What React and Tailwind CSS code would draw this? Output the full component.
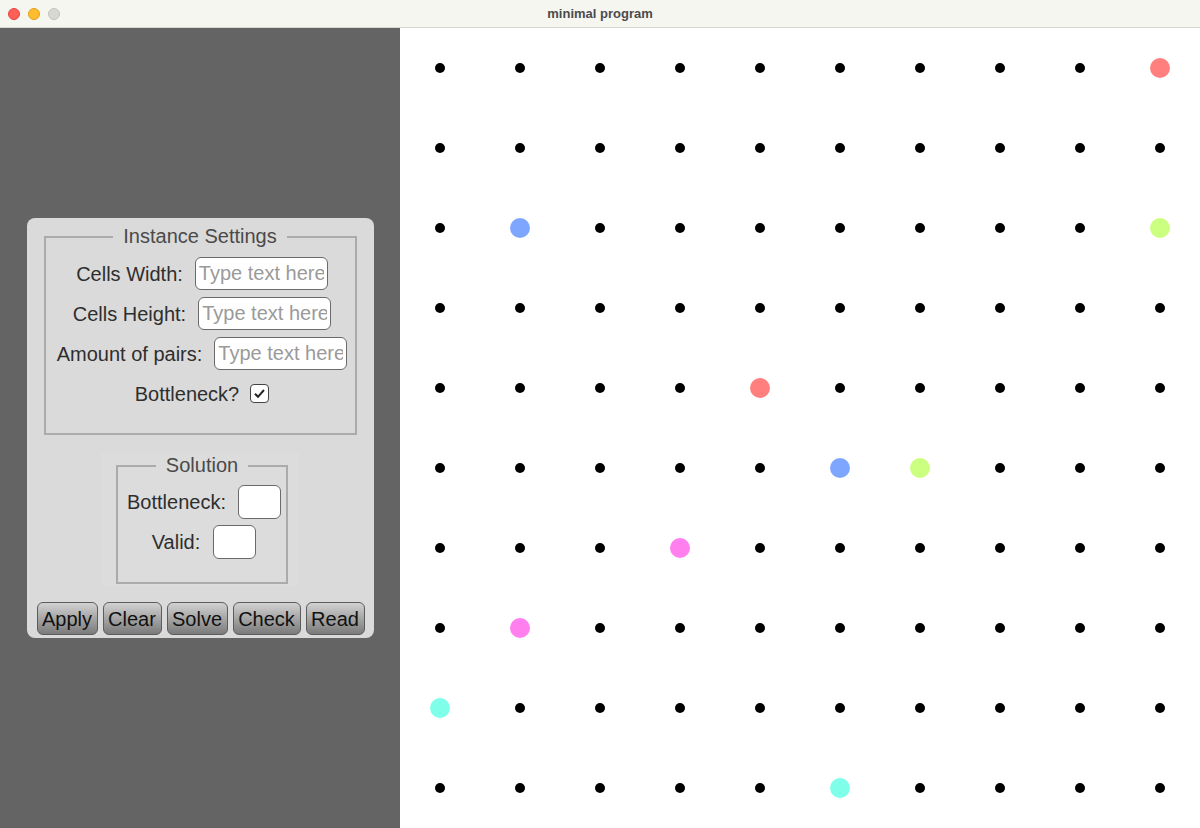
import React from "react";

const COLORS = {
  red: "bg-[#ff7f7f]",
  blue: "bg-[#7fa6ff]",
  lime: "bg-[#ccff7f]",
  pink: "bg-[#ff7fef]",
  cyan: "bg-[#7fffe9]",
};

const SPECIAL = {
  "9,0": "red",
  "1,2": "blue",
  "9,2": "lime",
  "4,4": "red",
  "5,5": "blue",
  "6,5": "lime",
  "3,6": "pink",
  "1,7": "pink",
  "0,8": "cyan",
  "5,9": "cyan",
};

function Cell({ x, y }) {
  const c = SPECIAL[`${x},${y}`];
  return (
    <div className="flex items-center justify-center">
      {c ? (
        <div className={`w-[20px] h-[20px] rounded-full ${COLORS[c]}`} />
      ) : (
        <div className="w-[10px] h-[10px] rounded-full bg-black" />
      )}
    </div>
  );
}

function Field({ label }) {
  return (
    <div className="flex items-center gap-3 pl-1">
      <span>{label}</span>
      <input
        readOnly
        placeholder="Type text here"
        className="w-[133px] h-[33px] rounded-[6px] border border-[#6a6a6a] bg-white px-[3px] text-[20px] text-[#333] placeholder:text-[#9a9a9a] outline-none"
      />
    </div>
  );
}

function Btn({ children, w }) {
  return (
    <button
      className={`${w} h-[33px] rounded-[6px] border border-[#5c5c5c] bg-linear-to-b from-[#d2d2d2] to-[#7b7b7b] text-[20px] text-[#111] flex items-center justify-center`}
    >
      {children}
    </button>
  );
}

export default function App() {
  const cells = [];
  for (let y = 0; y < 10; y++) for (let x = 0; x < 10; x++) cells.push(<Cell key={`${x}-${y}`} x={x} y={y} />);

  return (
    <div
      className="w-[1200px] h-[828px] flex flex-col overflow-hidden bg-[#646464]"
      style={{ fontFamily: '"Liberation Sans", Arial, sans-serif' }}
    >
      {/* title bar */}
      <div className="relative h-[28px] shrink-0 bg-[#f6f6f1] border-b border-[#d6d6d2] flex items-center justify-center">
        <div className="absolute left-[8px] top-[8px] flex gap-[8px]">
          <div className="w-[12px] h-[12px] rounded-full bg-[#fe5f57] border border-[#e2463f]" />
          <div className="w-[12px] h-[12px] rounded-full bg-[#febc2e] border border-[#e1a116]" />
          <div className="w-[12px] h-[12px] rounded-full bg-[#d7d7d3] border border-[#c3c3bf]" />
        </div>
        <span className="text-[13px] font-bold text-[#4b4b4b]">minimal program</span>
      </div>

      <div className="flex flex-1">
        {/* left column */}
        <div className="w-[400px] flex items-center justify-center bg-[#646464]">
          <div className="w-[347px] h-[420px] rounded-[8px] bg-[#dadada] flex flex-col items-center pt-[7px] text-[20px] text-[#2e2e2e]">
            <fieldset className="w-[313px] border-2 border-[#ababab] flex flex-col items-center gap-[7px] pt-[9px] pb-[23px]">
              <legend className="mx-auto px-[10px] text-[#4a4a4a] leading-[23px]">Instance Settings</legend>
              <Field label="Cells Width:" />
              <Field label="Cells Height:" />
              <Field label="Amount of pairs:" />
              <div className="flex items-center gap-[11px] h-[33px] pl-1">
                <span>Bottleneck?</span>
                <span className="w-[19px] h-[19px] rounded-[4px] border border-[#444] bg-white flex items-center justify-center">
                  <svg width="15" height="15" viewBox="0 0 15 15">
                    <path d="M3 7.8 L6 10.8 L12 4" fill="none" stroke="#222" strokeWidth="2" />
                  </svg>
                </span>
              </div>
            </fieldset>

            <div className="mt-[18px] w-[198px] h-[133px] bg-[#dcdcdc] pl-[15px] pr-[11px] pt-[1px]">
              <fieldset className="w-[172px] border-2 border-[#ababab] flex flex-col items-center gap-[6px] pt-[8px] pb-[23px]">
                <legend className="mx-auto px-[10px] text-[#4a4a4a] leading-[23px]">Solution</legend>
                <div className="flex items-center gap-3 pl-1">
                  <span>Bottleneck:</span>
                  <div className="w-[43px] h-[34px] rounded-[6px] border border-[#6a6a6a] bg-white" />
                </div>
                <div className="flex items-center gap-[13px] pl-1">
                  <span>Valid:</span>
                  <div className="w-[43px] h-[34px] rounded-[6px] border border-[#6a6a6a] bg-white" />
                </div>
              </fieldset>
            </div>

            <div className="mt-[16px] flex gap-[5px] pl-[1px]">
              <Btn w="w-[61px]">Apply</Btn>
              <Btn w="w-[59px]">Clear</Btn>
              <Btn w="w-[61px]">Solve</Btn>
              <Btn w="w-[68px]">Check</Btn>
              <Btn w="w-[59px]">Read</Btn>
            </div>
          </div>
        </div>

        {/* canvas */}
        <div className="w-[800px] h-[800px] bg-white grid grid-cols-10 grid-rows-10">{cells}</div>
      </div>
    </div>
  );
}
